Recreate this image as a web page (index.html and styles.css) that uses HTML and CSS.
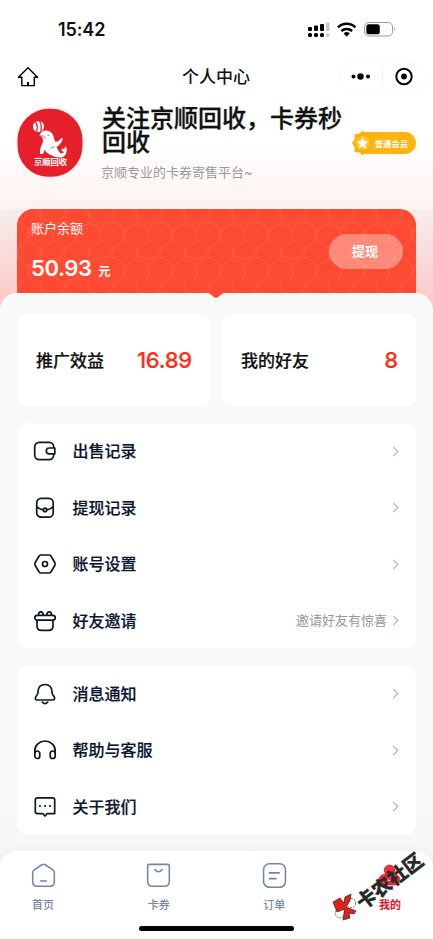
FILE: index.html
```html
<!DOCTYPE html>
<html lang="zh-CN">
<head>
<meta charset="utf-8">
<meta name="viewport" content="width=device-width, initial-scale=1">
<title>个人中心</title>
<link rel="stylesheet" href="styles.css">
</head>
<body>
<div class="app">
  <div class="status">
    <span class="time">15:42</span>
    <svg class="status-icons" width="90" height="18" viewBox="0 0 90 18">
      <g fill="#000">
        <rect x="1" y="7" width="4" height="4" rx="1"/><rect x="7" y="5.5" width="4" height="5.500" rx="1"/><rect x="13" y="4" width="4" height="7" rx="1"/>
        <rect x="1" y="13" width="4" height="4" rx="1.5"/><rect x="7" y="13" width="4" height="4" rx="1.5"/><rect x="13" y="13" width="4" height="4" rx="1.5"/>
      </g>
      <g fill="#c9c9c9"><rect x="19" y="2.500" width="3.500" height="8.500" rx="1"/><rect x="19" y="13" width="3.500" height="4" rx="1.500"/></g>
      <g fill="none" stroke="#000" stroke-width="2.500"><path d="M31 7.300a12.500 12.500 0 0 1 17.400 0"/><path d="M34.300 11a8 8 0 0 1 10.800 0"/></g>
      <path d="M36.600 13.400a4.500 4.500 0 0 1 6.200 0L39.700 16.800z"/>
      <rect x="57.500" y="2.500" width="28" height="13.500" rx="4.300" fill="none" stroke="#999"/>
      <rect x="59.300" y="4.300" width="13.500" height="10" rx="2.600"/>
      <path d="M87 7q2 2 0 4.200z" fill="#999"/>
    </svg>
  </div>
  <header class="nav">
    <svg class="home" width="22" height="22" viewBox="0 0 22 22" fill="none" stroke="#000" stroke-width="1.400" stroke-linejoin="round"><path d="M11 1.800L1.500 11.300H4.800V19.600H17.300V11.300H20.500Z"/><path d="M11 16v3.500" stroke-width="2"/></svg>
    <h1>个人中心</h1>
    <div class="capsule">
      <svg width="86" height="32" viewBox="0 0 86 32"><circle cx="14.500" cy="15.500" r="2"/><circle cx="21.500" cy="15.500" r="3.200"/><circle cx="29" cy="15.500" r="2"/><path d="M43.500 6v20" stroke="#f2f2f2"/><circle cx="65" cy="15.500" r="7.700" fill="none" stroke="#000" stroke-width="2"/><circle cx="65" cy="15.500" r="2.900"/></svg>
    </div>
  </header>

  <section class="profile">
    <svg class="avatar" width="70" height="76" viewBox="0 0 70 76">
      <rect x="1" y="1" width="68" height="74" rx="34" fill="#fff3f3"/>
      <rect x="2.500" y="3.800" width="65" height="68" rx="31" fill="#e5202b"/>
      <circle cx="23.500" cy="21.500" r="5.500" fill="#fff"/>
      <path d="M20.500 17q3 4 1 9.500M24.500 16q3 5 1 10.500" fill="none" stroke="#e5202b" stroke-width="1.300"/>
      <path d="M24.500 30.500C26 24.500 34 24 37.500 29C39 32 39 34.500 40.500 37Q44 36.500 46 33.500Q49 31 46.500 37Q44 41 41.500 42Q43.500 46 45 48Q48 49 49 47Q45 45.500 47.500 43.500Q50 45 50.500 40.500Q54 48 48 52Q42 53.500 37 50.500Q32 49 29.500 44.500Q29 50 25 49Q24.500 43 27.500 38.500Q28.500 34 27 32Z" fill="#fff"/>
      <path d="M32.500 30.500h1.600M25.500 30.500q4 0 5.500 3M36 43q2.500 0 3.500-2" fill="none" stroke="#e5202b" stroke-width=".7"/>
      <text x="35.500" y="59.500" class="avatar-text">京顺回收</text>
    </svg>
    <div class="who">
      <h2>关注京顺回收，卡券秒回收</h2>
      <p>京顺专业的卡券寄售平台~</p>
    </div>
    <div class="badge">
      <svg width="22" height="26" viewBox="0 0 22 26"><path d="M10.500 .5L13.500 3.500L18.500 4L18.500 9L21 13L18.500 17L18.500 22L13.500 22.500L10.500 25.500L7.500 22.500L2.500 22L2.500 17L0 13L2.500 9L2.500 4L7.500 3.500Z" fill="#ffb40c"/><circle cx="10.500" cy="13" r="7.800" fill="#ffc428" stroke="#ffa70c"/><path d="M10.500 7.200l1.700 4 4.200.3-3.200 2.800 1 4.200-3.700-2.300-3.700 2.300 1-4.200-3.200-2.800 4.200-.3z" fill="#fff"/></svg>
      <span>普通会员</span>
    </div>
  </section>

  <section class="balance">
    <svg class="swirls" width="399" height="84">
      <defs>
        <pattern id="swirl" width="48" height="36" patternUnits="userSpaceOnUse">
          <g fill="#ff4d35" stroke="#f8402a" stroke-width=".7">
            <g id="c"><circle cx="12" cy="9" r="12" stroke="#ff5f45"/><circle cx="12" cy="9" r="9.500"/><circle cx="12" cy="9" r="7"/><circle cx="12" cy="9" r="4.500"/><circle cx="12" cy="9" r="2"/></g>
            <use href="#c" x="24" y="-7"/><use href="#c" x="24" y="29"/>
            <use href="#c" x="-13" y="16"/><use href="#c" x="35" y="16"/><use href="#c" x="12" y="18"/>
          </g>
        </pattern>
      </defs>
      <rect width="399" height="84" fill="url(#swirl)"/>
    </svg>
    <div class="amount">
      <span class="label">账户余额</span>
      <div class="money">50.93<small>元</small></div>
    </div>
    <button class="withdraw">提现</button>
  </section>

  <main class="sheet">
    <svg class="notch" width="16" height="6" viewBox="0 0 16 6"><path d="M0 0H16Q13 1 10.500 3.800Q8 6 5.500 3.800Q3 1 0 0Z" fill="#ff4b33"/></svg>
    <div class="stats">
      <div class="stat"><span>推广效益</span><b>16.89</b></div>
      <div class="stat"><span>我的好友</span><b>8</b></div>
    </div>

    <ul class="menu">
      <li><svg class="icon" viewBox="0 0 24 24"><rect x="1.700" y="3.300" width="19" height="17.300" rx="4.500"/><path d="M21.800 9H16.200a2.800 2.800 0 0 0 0 5.800h5.600z" fill="#fff"/></svg><span>出售记录</span><i class="arrow"></i></li>
      <li><svg class="icon" viewBox="0 0 24 24"><rect x="3.700" y="2.400" width="16.500" height="18.800" rx="4.500"/><path d="M3.900 10.800Q7 13.500 10.300 13.800M13.700 13.800Q17 13.500 20.100 10.800"/><circle cx="12" cy="13.900" r="1.700"/></svg><span>提现记录</span><i class="arrow"></i></li>
      <li><svg class="icon" viewBox="0 0 24 24"><path d="M8 3H16Q17.200 3 17.900 4L21.800 10.500Q22.500 12 21.800 13.500L17.900 20Q17.200 21 16 21H8Q6.800 21 6.100 20L2.200 13.500Q1.500 12 2.200 10.500L6.100 4Q6.800 3 8 3Z"/><circle cx="12" cy="12" r="2.500"/></svg><span>账号设置</span><i class="arrow"></i></li>
      <li><svg class="icon" viewBox="0 0 24 24"><rect x="1.800" y="6.300" width="20.400" height="4.800" rx="2.400"/><path d="M4 11.300V17Q4 21.400 8.500 21.400H15.500Q20 21.400 20 17V11.300M5.500 6Q5.500 2.800 7.800 2.800Q10 2.800 10.200 6M13.800 6Q14 2.800 16.200 2.800Q18.500 2.800 18.500 6"/></svg><span>好友邀请</span><em>邀请好友有惊喜</em><i class="arrow"></i></li>
    </ul>

    <ul class="menu">
      <li><svg class="icon" viewBox="0 0 24 24"><path d="M12 2.500Q5.500 2.500 5 9.500V10.500Q5 12 3.500 13.700Q.8 17.800 4.200 18H19.800Q23.200 17.800 20.500 13.700Q19 12 19 10.500V9.500Q18.500 2.500 12 2.500ZM9.300 20.200Q12 23.100 14.700 20.200"/></svg><span>消息通知</span><i class="arrow"></i></li>
      <li><svg class="icon" viewBox="0 0 24 24"><path d="M1.800 15.500V12.500A10.200 9.500 0 0 1 22.200 12.500V15.500"/><rect x="1.800" y="13" width="5" height="7.500" rx="2.500"/><rect x="17.200" y="13" width="5" height="7.500" rx="2.500"/></svg><span>帮助与客服</span><i class="arrow"></i></li>
      <li><svg class="icon" viewBox="0 0 24 24"><path d="M4.500 2.800H19.500Q21.700 2.800 21.700 5V18.600H14.200L12 21L9.800 18.600H4.500Q2.300 18.600 2.300 16.500V5Q2.300 2.800 4.500 2.800Z"/><path d="M6.900 11h.1M12 11h.1M17 11h.1" stroke-width="2"/></svg><span>关于我们</span><i class="arrow"></i></li>
    </ul>
  </main>

  <nav class="tabs">
    <a><svg viewBox="0 0 24 24"><path d="M10.400 1.700Q12 .8 13.600 1.700L20.700 6.300Q22.400 7.500 22.400 9.500V18Q22.400 22.300 18 22.300H6Q1.600 22.300 1.600 18V9.500Q1.600 7.500 3.300 6.300ZM9.200 17.200H14.800"/></svg><span>首页</span></a>
    <a><svg viewBox="0 0 24 24"><path d="M3 1.300H21Q22.400 1.300 22.400 2.700V17.500Q22.400 22.300 17.600 22.300H6.400Q1.600 22.300 1.600 17.500V2.700Q1.600 1.300 3 1.300ZM8.500 6.200Q12 10.500 15.500 6.200"/></svg><span>卡券</span></a>
    <a><svg viewBox="0 0 24 24"><rect x="1.500" y=".8" width="21" height="22.500" rx="5.500"/><path d="M7 9.500H16.500M7 15H13.500"/></svg><span>订单</span></a>
    <a class="active"><svg viewBox="0 0 24 24"><circle cx="12" cy="7" r="5"/><rect x="2" y="11" width="20" height="10" rx="5"/><path d="M8 15Q12 19 16 15" stroke="#fff"/></svg><span>我的</span></a>
    <div class="home-indicator"></div>
  </nav>

  <svg class="watermark" width="103" height="80" viewBox="0 0 103 80">
    <g transform="translate(15 60)" stroke="#111" stroke-width=".6">
      <circle cx="6" cy="-3" r="4.600" fill="#fff" stroke-dasharray="2 1"/><circle cx="-5" cy="7" r="4.800" fill="#fff" stroke-dasharray="2 1"/>
      <path d="M-12 -4L-5 -8L-1 -3L0 -9L6 -12L5 -5L1 1L11 5L9 8L4 7L5 12L-2 14L-1 7L0 3L-8 6Z" fill="#df2119"/>
    </g>
    <text transform="translate(33 64.500) rotate(-37.500)" class="watermark-text">卡农社区</text>
  </svg>
</div>
</body>
</html>
```
FILE: styles.css
```css
* { box-sizing: border-box; }
body, h1, h2, p, ul { margin: 0; padding: 0; }
body {
  background: #fff;
  color: #111;
  font-family: Inter, "Noto Sans CJK SC", sans-serif;
}
.app {
  position: relative;
  display: flex;
  flex-direction: column;
  width: 433px;
  height: 939px;
  overflow: hidden;
  background: linear-gradient(#fff 0, #fff 145px, #fff2f0 209px, #f7eded 210px, #fcc9c7 305px);
}

.status {
  display: flex;
  justify-content: space-between;
  align-items: center;
  height: 57px;
  padding: 2px 37px 0 58px;
}
.time { font-size: 18px; font-weight: 600; line-height: 20px; letter-spacing: -.1px; }
.status-icons { margin: -2px -1px 0 0; }

.nav {
  display: grid;
  grid-template-columns: 86px 1fr 86px;
  align-items: center;
  height: 40px;
  padding: 0 8px 0 17px;
}
.nav h1 { font-size: 17px; font-weight: 500; line-height: 24px; text-align: center; padding-right: 10px; }
.capsule {
  height: 33px;
  border-radius: 17px;
  box-shadow: inset 0 0 0 1px #f8f8f8;
}
.capsule svg { display: block; }

.profile {
  display: flex;
  align-items: flex-start;
  height: 112px;
  padding: 8px 17px 0 15px;
}
.avatar { flex: none; }
.avatar-text { font-size: 8.300px; font-weight: 700; fill: #fff; text-anchor: middle; }
.who { width: 250px; margin-left: 16px; }
.who h2 { font-size: 24px; font-weight: 500; line-height: 24px; margin: 2px 0 0 1px; -webkit-text-stroke: .3px #111; }
.who p { font-size: 13px; line-height: 20px; color: #999; margin-top: 7px; }
.badge {
  display: flex;
  align-items: center;
  flex: none;
  height: 22px;
  margin: 27px 0 0 auto;
  padding-right: 8px;
  border-radius: 4px 11px 11px 4px;
  background: linear-gradient(90deg, transparent 10px, #ffb413 10px);
  color: #fff;
  font-size: 8.300px;
  font-weight: 700;
}
.badge span { margin: -1px 0 0 1px; }

.balance {
  position: relative;
  display: flex;
  justify-content: space-between;
  height: 84px;
  margin: 0 17px;
  border-radius: 17px 17px 0 0;
  overflow: hidden;
  background: #ff4b33;
  color: #fff;
}
.swirls { position: absolute; inset: 0; }
.amount { position: relative; padding: 9px 0 0 14px; }
.label { display: block; font-size: 13px; line-height: 20px; }
.money { margin-top: 17px; font-size: 22px; font-weight: 600; line-height: 26px; letter-spacing: -.4px; }
.money small { margin-left: 7px; font-size: 12px; font-weight: 700; }
.withdraw {
  position: relative;
  width: 74px;
  height: 35px;
  margin: 25px 13px 0 0;
  padding: 0 2px 2px 0;
  border: 0;
  border-radius: 18px;
  background: rgba(255, 255, 255, .35);
  color: #fff;
  font: 700 13px/1 "Noto Sans CJK SC", sans-serif;
}

.sheet {
  position: relative;
  flex: none;
  height: 580px;
  margin-bottom: -22px;
  padding: 21px 17px 0;
  border-radius: 17px 17px 0 0;
  background: linear-gradient(#f9f9f9 500px, #f5f5f5);
}
.notch { position: absolute; left: 208px; top: 0; }
.stats { display: grid; grid-template-columns: 193px 194px; gap: 12px; }
.stat {
  display: flex;
  justify-content: space-between;
  align-items: center;
  height: 92px;
  padding: 0 18px;
  border-radius: 9px;
  background: #fff;
}
.stat span { margin: -1px 0 0 1px; font-size: 17px; font-weight: 500; -webkit-text-stroke: .2px #111; }
.stat b { font-size: 22px; font-weight: 500; letter-spacing: -.2px; color: #ff2d16; -webkit-text-stroke: .2px #ff2d16; }

.menu {
  margin-top: 17px;
  border-radius: 12px;
  background: #fff;
  list-style: none;
}
.menu li {
  display: flex;
  align-items: center;
  height: 56.500px;
  padding: 0 18px 0 16px;
  color: #0a1530;
  font-size: 16px;
  font-weight: 500;
}
.menu li:last-child { height: 56px; }
.menu span { margin: -2px 0 0 -.5px; -webkit-text-stroke: .2px #0a1530; }
.icon {
  width: 24px;
  height: 24px;
  margin-right: 16px;
  fill: none;
  stroke: #111722;
  stroke-width: 1.700;
  stroke-linecap: round;
  stroke-linejoin: round;
}
.arrow {
  width: 7px;
  height: 7px;
  margin-left: auto;
  border: solid #aaa;
  border-width: 1px 1px 0 0;
  transform: translateX(-1px) rotate(45deg);
}
.menu em { margin: -2px 0 0 auto; font-size: 13px; font-style: normal; font-weight: 400; color: #999; }
.menu em + .arrow { margin-left: 4px; }

.tabs {
  position: relative;
  display: flex;
  justify-content: space-between;
  flex: none;
  height: 88px;
  padding: 12px 27px 0;
  border-radius: 17px 17px 0 0;
  background: #fff;
  box-shadow: 0 0 14px rgba(0, 0, 0, .03);
}
.tabs a { display: flex; flex-direction: column; align-items: center; width: 32px; color: #7785a5; }
.tabs svg { width: 25px; height: 25px; fill: none; stroke: currentColor; stroke-width: 1.500; stroke-linecap: round; stroke-linejoin: round; }
.tabs span { margin-top: 9px; font-size: 11px; font-weight: 500; line-height: 16px; }
.tabs .active { color: #e60f25; }
.tabs .active svg { fill: #ef3038; stroke-width: .800; }
.tabs .active span { font-weight: 700; }
.home-indicator {
  position: absolute;
  left: 139px;
  bottom: 8px;
  width: 155px;
  height: 5px;
  border-radius: 3px;
  background: #000;
}

.watermark { position: absolute; left: 330px; top: 846px; }
.watermark-text { font-size: 19.500px; font-weight: 900; fill: #292929; stroke: #292929; stroke-width: .2px; }
```
